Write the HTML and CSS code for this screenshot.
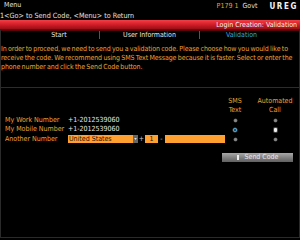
FILE: index.html
```html
<!DOCTYPE html>
<html>
<head>
<meta charset="utf-8">
<link rel="stylesheet" href="styles.css">
</head>
<body>
<div class="screen">
  <div class="top">
    <div class="top-left">
      <div class="menu">Menu</div>
      <div class="hint">1&lt;Go&gt; to Send Code, &lt;Menu&gt; to Return</div>
    </div>
    <div class="top-right">
      <span class="pg">P179 1</span><span class="govt">Govt</span><span class="ureg">UREG</span>
    </div>
  </div>
  <div class="titlebar">Login Creation: Validation</div>
  <div class="panel">
    <div class="tabs">
      <div class="tab tab-start">Start</div>
      <div class="tab">User Information</div>
      <div class="tab tab-active">Validation</div>
    </div>
    <p class="intro">In order to proceed, we need to send you a validation code. Please choose how you would like to receive the code. We recommend using SMS Text Message because it is faster. Select or enter the phone number and click the Send Code button.</p>
    <div class="divider"></div>
    <div class="row row-head">
      <div class="head c-sms">SMS<br>Text</div>
      <div class="head c-auto">Automated<br>Call</div>
    </div>
    <div class="row">
      <div class="label">My Work Number</div>
      <div class="value">+1-2012539060</div>
      <div class="radio c-sms"><span class="dot"></span></div>
      <div class="radio c-auto"><span class="dot"></span></div>
    </div>
    <div class="row">
      <div class="label">My Mobile Number</div>
      <div class="value">+1-2012539060</div>
      <div class="radio c-sms"><span class="dot dot-on"></span></div>
      <div class="radio c-auto"><span class="dot dot-focus"></span></div>
    </div>
    <div class="row">
      <div class="label">Another Number</div>
      <div class="value entry">
        <div class="select"><span class="sel-text">United States</span><span class="sel-btn"><svg width="3" height="2" viewBox="0 0 4 3"><path d="M0 0h4L2 3z" fill="#e0e0e0"/></svg></span></div>
        <span class="sep">+</span>
        <div class="box box-cc">1</div>
        <span class="sep">-</span>
        <div class="box box-num"></div>
      </div>
      <div class="radio c-sms"><span class="dot"></span></div>
      <div class="radio c-auto"><span class="dot"></span></div>
    </div>
    <div class="actions">
      <div class="btn"><span class="btn-ico"></span>Send Code</div>
    </div>
  </div>
</div>
</body>
</html>
```
FILE: styles.css
```css
html, body {
  margin: 0;
  padding: 0;
  background: #000;
}
.screen {
  width: 300px;
  height: 240px;
  overflow: hidden;
  background: #000;
  font-family: "DejaVu Sans Condensed", "Liberation Sans", sans-serif;
  font-stretch: condensed;
  font-size: 7px;
  color: #e0e0e0;
  display: flex;
  flex-direction: column;
}
.top {
  height: 20px;
  display: flex;
  justify-content: space-between;
}
.top-left {
  display: flex;
  flex-direction: column;
}
.menu {
  height: 11px;
  line-height: 11px;
  padding-left: 4px;
}
.hint {
  height: 9px;
  line-height: 9px;
  font-size: 7.2px;
}
.top-right {
  display: flex;
  align-items: center;
  height: 12px;
  padding-right: 2px;
}
.pg { color: #f0a030; margin-right: 4px; }
.govt { color: #e0e0e0; margin-right: 12px; }
.ureg {
  font-family: "DejaVu Sans", sans-serif;
  font-weight: bold;
  font-size: 8px;
  letter-spacing: 1.6px;
  color: #f4f4f4;
}
.titlebar {
  height: 10px;
  line-height: 10px;
  background: linear-gradient(#f04048, #d8202a 40%, #a01018 85%, #600008);
  color: #f2f2f2;
  text-align: right;
  padding-right: 3px;
}
.panel {
  flex: 1;
  border: 1px solid #2a2a2a;
  border-top: none;
  margin-bottom: 2px;
  display: flex;
  flex-direction: column;
}
.tabs {
  display: grid;
  grid-template-columns: 99px 100px 99px;
  height: 10px;
  border-top: 1px solid #5a0008;
}
.tab {
  text-align: center;
  line-height: 9px;
  height: 8px;
  border-right: 1px solid #555;
  color: #e6e6e6;
}
.tab-start { padding-left: 18px; }
.tab-active {
  border-right: none;
  color: #30a8e0;
  padding-right: 16px;
}
.intro {
  margin: 4px 0 0 0;
  line-height: 9px;
  color: #f0a030;
  letter-spacing: -0.1px;
  word-spacing: -0.5px;
}
.divider {
  height: 1px;
  background: #2c2c2c;
  margin-top: 15px;
}
.row {
  display: grid;
  grid-template-columns: 63px 160px 14px 26px 14px;
  padding-left: 4px;
  height: 9.5px;
  align-items: center;
}
.row-head {
  height: 18px;
  margin-top: 9px;
  margin-bottom: 0.5px;
  align-items: start;
}
.head {
  justify-self: center;
  text-align: center;
  white-space: nowrap;
  line-height: 9px;
  color: #f0a030;
}
.c-sms { grid-column: 3; }
.c-auto { grid-column: 5; }
.label {
  grid-column: 1;
  color: #f0a030;
  line-height: 9.5px;
  white-space: nowrap;
}
.value {
  grid-column: 2;
  line-height: 9.5px;
  color: #e6e6e6;
  white-space: nowrap;
}
.radio {
  display: flex;
  align-items: center;
  justify-content: center;
}
.dot {
  width: 3px;
  height: 3px;
  border-radius: 50%;
  background: #8a8a8a;
  box-shadow: 0 0 0 0.5px #555;
}
.dot-on {
  width: 2px;
  height: 2px;
  background: #0a2838;
  border: 1px solid #50b0e0;
}
.dot-focus {
  width: 3px;
  height: 4px;
  border-radius: 1px;
  background: #eee;
  box-shadow: 0 0 0 1px #444;
}
.entry {
  display: flex;
  align-items: center;
}
.select {
  width: 70px;
  height: 8px;
  background: #ffa030;
  display: flex;
  align-items: center;
  justify-content: space-between;
}
.sel-text {
  color: #1a1000;
  padding-left: 1px;
  line-height: 8px;
}
.sel-btn {
  width: 5px;
  height: 8px;
  background: #666;
  display: flex;
  align-items: center;
  justify-content: center;
}
.sep {
  color: #c8c8c8;
  width: 7px;
  text-align: center;
}
.box {
  height: 8px;
  background: #ffa030;
  line-height: 8px;
  color: #1a1000;
}
.box-cc {
  width: 13px;
  text-align: center;
}
.box-num {
  width: 60px;
}
.actions {
  display: flex;
  justify-content: flex-end;
  padding-right: 6px;
  margin-top: 9px;
}
.btn {
  width: 71px;
  height: 9px;
  line-height: 9px;
  background: linear-gradient(#a8a8a8, #7a7a7a 60%, #606060);
  color: #e8e8e8;
  display: flex;
  justify-content: center;
  align-items: center;
}
.btn-ico {
  width: 2px;
  height: 5px;
  background: #eee;
  margin-right: 6px;
}
```
